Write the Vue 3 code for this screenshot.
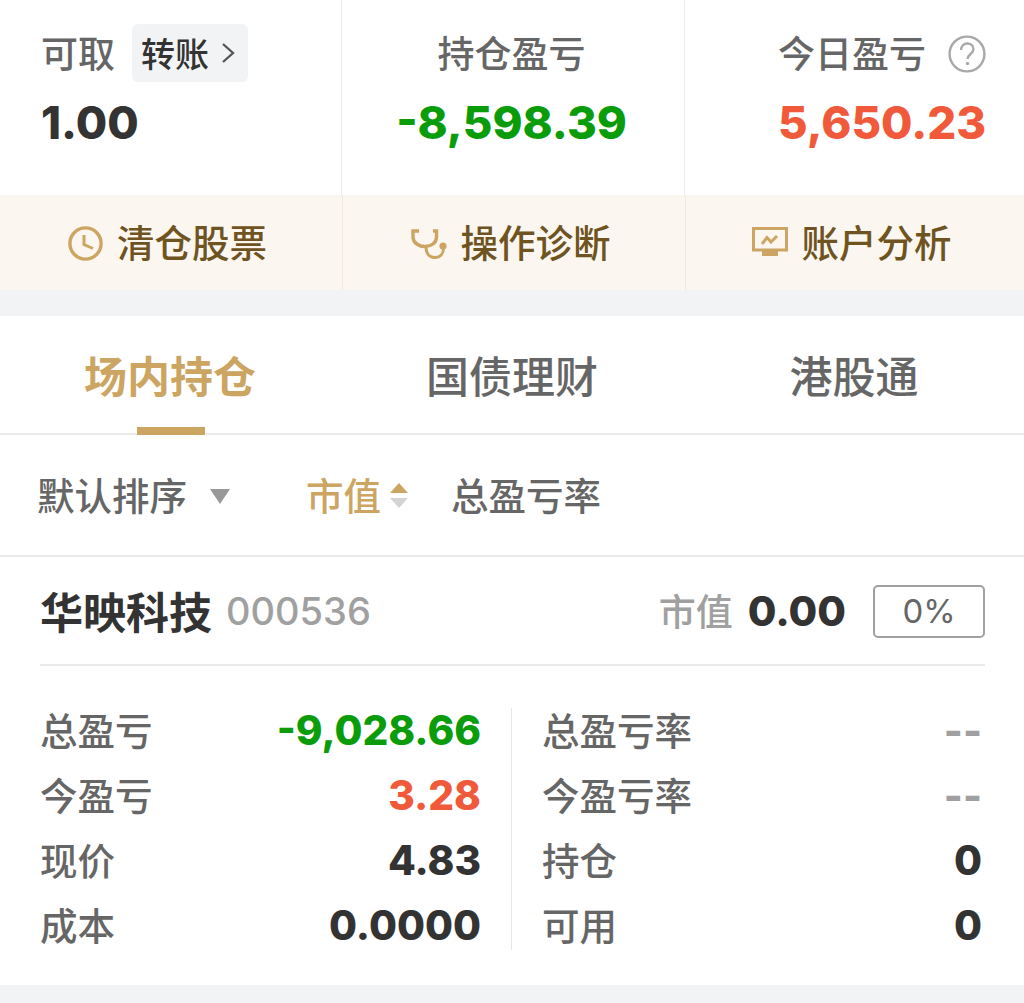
<script setup>
const rowsL = [
  { label: '总盈亏', value: '-9,028.66', cls: 'green' },
  { label: '今盈亏', value: '3.28', cls: 'red' },
  { label: '现价', value: '4.83', cls: '' },
  { label: '成本', value: '0.0000', cls: '' },
]
const rowsR = [
  { label: '总盈亏率', value: '--', cls: 'muted' },
  { label: '今盈亏率', value: '--', cls: 'muted' },
  { label: '持仓', value: '0', cls: '' },
  { label: '可用', value: '0', cls: '' },
]
</script>

<template>
  <div class="page">
    <section class="summary">
      <div class="cell cell-left">
        <div class="head">
          <span class="lbl">可取</span>
          <span class="transfer"><span class="transfer-text">转账</span>
            <svg class="chev" width="14" height="22" viewBox="0 0 14 22"><path d="M2 2 L12 11 L2 20" fill="none" stroke="#555" stroke-width="2.3"/></svg>
          </span>
        </div>
        <div class="num">1.00</div>
      </div>
      <div class="cell cell-mid">
        <div class="head"><span class="lbl">持仓盈亏</span></div>
        <div class="num green">-8,598.39</div>
      </div>
      <div class="cell cell-right">
        <div class="head">
          <span class="lbl">今日盈亏</span>
          <svg class="help" width="38" height="38" viewBox="0 0 38 38">
            <circle cx="19" cy="19" r="17.4" fill="none" stroke="#a8a8a8" stroke-width="2.4"/>
            <path d="M13 15 C13 11 16 8.5 19.3 8.5 C23 8.5 25.5 11 25.5 14.3 C25.5 18.5 20 19 19.5 24" fill="none" stroke="#a8a8a8" stroke-width="2.4"/>
            <circle cx="19.5" cy="28.5" r="1.7" fill="#a8a8a8"/>
          </svg>
        </div>
        <div class="num red">5,650.23</div>
      </div>
    </section>

    <section class="actions">
      <div class="action">
        <svg width="35" height="35" viewBox="0 0 35 35">
          <circle cx="17.5" cy="17.5" r="15.6" fill="none" stroke="#cca563" stroke-width="3.4"/>
          <path d="M16 9 V18.5 L25 22.5" fill="none" stroke="#cca563" stroke-width="3"/>
        </svg>
        <span>清仓股票</span>
      </div>
      <div class="action">
        <svg width="36" height="32" viewBox="0 0 36 32">
          <path d="M8 3 H2 V9 C2 15 8 18.5 14 18.5 C20 18.5 25.5 15 25.5 9 V3 H22" fill="none" stroke="#cca563" stroke-width="3.4"/>
          <path d="M15 19 C15 26 19 29.5 24 29.5 C29 29.5 32.5 26 32.5 20" fill="none" stroke="#cca563" stroke-width="3"/>
          <circle cx="32" cy="18" r="3.6" fill="#cca563"/>
        </svg>
        <span>操作诊断</span>
      </div>
      <div class="action">
        <svg class="monitor" width="36" height="29" viewBox="0 0 36 29">
          <rect x="1.5" y="1.5" width="33" height="21.5" fill="none" stroke="#cca563" stroke-width="3"/>
          <path d="M10 17 L15 10.5 L19 15 L25 9" fill="none" stroke="#cca563" stroke-width="3"/>
          <rect x="10" y="24" width="16" height="5" fill="#cca563"/>
        </svg>
        <span>账户分析</span>
      </div>
    </section>

    <div class="band"></div>

    <nav class="tabs">
      <div class="tab active">场内持仓<i class="bar"></i></div>
      <div class="tab">国债理财</div>
      <div class="tab">港股通</div>
    </nav>

    <div class="filters">
      <span class="f f1">默认排序</span>
      <span class="tri"></span>
      <span class="f f2">市值</span>
      <span class="sort"><i class="up"></i><i class="down"></i></span>
      <span class="f f3">总盈亏率</span>
    </div>

    <section class="card">
      <header class="card-head">
        <span class="name">华映科技</span>
        <span class="code">000536</span>
        <span class="mv-l">市值</span>
        <span class="mv">0.00</span>
        <span class="pct">0%</span>
      </header>
      <div class="grid">
        <div class="col col-l">
          <div v-for="r in rowsL" :key="r.label" class="row">
            <span class="rl">{{ r.label }}</span>
            <span class="rv" :class="r.cls">{{ r.value }}</span>
          </div>
        </div>
        <div class="col col-r">
          <div v-for="r in rowsR" :key="r.label" class="row">
            <span class="rl">{{ r.label }}</span>
            <span class="rv" :class="r.cls">{{ r.value }}</span>
          </div>
        </div>
      </div>
    </section>
    <div class="foot"></div>
  </div>
</template>

<style scoped>
.page {
  width: 1024px;
  height: 1003px;
  overflow: hidden;
  background: #fff;
  font-family: "Noto Sans CJK SC", Inter, sans-serif;
  color: #333;
}
.summary { display: flex; height: 195px; }
.cell { height: 195px; box-sizing: border-box; padding-top: 24px; }
.cell-left { width: 342px; padding-left: 41px; border-right: 1px solid #ececec; }
.cell-mid { width: 343px; padding-right: 3px; border-right: 1px solid #ececec; text-align: center; }
.cell-right { flex: 1; padding-left: 93px; }
.head { display: flex; align-items: center; height: 58px; }
.cell-mid .head { justify-content: center; }
.lbl { font-size: 37px; font-weight: 500; line-height: 58px; color: #666; margin-bottom: 2px; }
.transfer {
  display: flex; align-items: center; margin-left: 17px; width: 116px; height: 58px;
  box-sizing: border-box; padding-left: 9px; background: #f2f3f5; border-radius: 6px;
  font-size: 34px; font-weight: 500; color: #333;
}
.transfer-text { margin-bottom: 2px; }
.chev { margin-left: 12px; }
.help { margin-left: 22px; margin-top: 2px; }
.num {
  font-family: Inter, "Liberation Sans", sans-serif; font-weight: 800; font-size: 45.5px;
  line-height: 56px; margin-top: 13px; color: #333;
}
.green { color: #0a9c0a; }
.red { color: #f0593a; }
.muted { color: #a0a0a0; }
.actions { display: flex; height: 95px; background: #fbf7f0; }
.action {
  display: flex; align-items: center; justify-content: center; gap: 14px;
  width: 343px; font-size: 37.5px; font-weight: 500; color: #6f5422; border-right: 1px solid #efe9de;
  box-sizing: border-box; padding-right: 7px; padding-bottom: 5px;
}
.action:last-child { flex: 1; border-right: 0; }
.action svg { margin-top: 7px; }
.action .monitor { margin-top: 3px; }
.band { height: 26px; background: #f2f3f5; }
.tabs { display: flex; height: 119px; box-sizing: border-box; border-bottom: 2px solid #eaeaea; }
.tab {
  position: relative; flex: 0 0 344px; text-align: center; font-size: 43px; line-height: 116px; color: #666; font-weight: 500;
}
.tab.active { flex-basis: 340px; color: #cca563; font-weight: 700; }
.tab:last-child { flex: 1; }
.bar { position: absolute; left: 137px; bottom: -2px; width: 68px; height: 8px; background: #cca563; }
.filters {
  display: flex; align-items: center; height: 122px; box-sizing: border-box; padding-left: 37px;
  border-bottom: 2px solid #eaeaea; font-size: 37.5px; font-weight: 500; color: #666;
}
.f { margin-bottom: 4px; }
.tri { margin-left: 23px; margin-top: 2px; border-left: 10px solid transparent; border-right: 10px solid transparent; border-top: 15px solid #999; }
.f2 { margin-left: 76px; color: #cca563; }
.sort { display: flex; flex-direction: column; gap: 5px; margin-left: 9px; }
.sort i { display: block; border-left: 9px solid transparent; border-right: 9px solid transparent; }
.up { border-bottom: 10px solid #cca563; }
.down { border-top: 10px solid #d4d4d4; }
.f3 { margin-left: 43px; }
.card { padding: 0 39px 0 40px; }
.card-head {
  display: flex; align-items: center; height: 109px; box-sizing: border-box; border-bottom: 2px solid #eaeaea;
}
.name { font-size: 43px; font-weight: 700; color: #333; margin-bottom: 2px; }
.code { margin-left: 14px; font-family: Inter, sans-serif; font-size: 38px; font-weight: 500; color: #a0a0a0; }
.mv-l { margin-left: auto; font-size: 37px; font-weight: 500; color: #a0a0a0; margin-bottom: 2px; }
.mv { margin-left: 15px; font-family: Inter, sans-serif; font-weight: 800; font-size: 41.5px; color: #333; }
.pct {
  margin-left: 27px; margin-top: 2px; width: 112px; height: 53px; box-sizing: border-box; border: 2px solid #a0a0a0; border-radius: 5px;
  text-align: center; font-family: Inter, sans-serif; font-size: 33px; line-height: 49px; color: #666;
}
.grid { display: flex; margin-top: 42px; height: 242px; }
.col { box-sizing: border-box; display: flex; flex-direction: column; }
.col-l { width: 472px; padding-right: 30px; border-right: 1px solid #e6e6e6; }
.col-r { flex: 1; padding-left: 30px; padding-right: 3px; }
.row { display: flex; flex: none; align-items: center; justify-content: space-between; height: 65px; font-size: 37.5px; font-weight: 500; }
.row:first-child { margin-top: -10px; }
.rl { color: #666; margin-bottom: 5px; }
.rv { font-family: Inter, sans-serif; font-weight: 800; font-size: 40.5px; }
.foot { margin-top: 35px; height: 40px; background: #f2f3f5; }
</style>
